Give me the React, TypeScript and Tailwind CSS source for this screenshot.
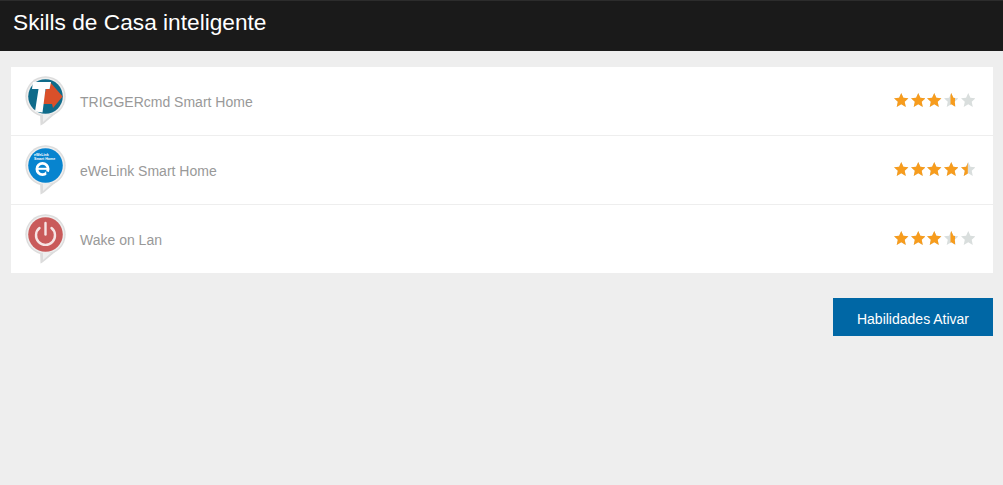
import { useId } from 'react';

const STAR = 'M7.25 0 L9.4 4.8 L14.5 5.3 L10.7 8.8 L11.8 14 L7.25 11.3 L2.7 14 L3.8 8.8 L0 5.3 L5.1 4.8 Z';

// from/to are the slice of the star (0-14.5) painted orange
function Star({ from = 0, to = 14.5 }: { from?: number; to?: number }) {
    const id = useId();
    return (
        <svg width="14.5" height="14" viewBox="0 0 14.5 14">
            <defs>
                <clipPath id={id}>
                    <rect x={from} y="0" width={to - from} height="14" />
                </clipPath>
            </defs>
            <path d={STAR} fill="#d9dedd" />
            <path d={STAR} fill="#f79c1d" clipPath={`url(#${id})`} />
        </svg>
    );
}

function Rating({ value }: { value: number }) {
    const full = Math.floor(value);
    return (
        <div className="flex gap-[2.1px] mr-[18px] mt-[-4px]">
            {[0, 1, 2, 3, 4].map((i) => {
                if (i < full) return <Star key={i} />;
                if (i > full) return <Star key={i} to={0} />;
                // the half star is drawn differently on the 3.5 ratings
                return value === 3.5 ? <Star key={i} from={6.5} to={11} /> : <Star key={i} to={6.8} />;
            })}
        </div>
    );
}

function Bubble({ children }: { children: React.ReactNode }) {
    return (
        <svg width="42" height="50" viewBox="0 0 42 50" className="shrink-0 mt-[-2px]">
            <path d="M15 36 L15.5 49.5 Q17 49.5 30 38 Z" fill="#dcdcdc" />
            <circle cx="20.5" cy="20.5" r="20.2" fill="#dddddd" />
            <path d="M18 38 L18 46 L26 39 Z" fill="#efefef" />
            <circle cx="20.5" cy="20.5" r="18.8" fill="#eeeeee" />
            {children}
        </svg>
    );
}

function TriggerIcon() {
    return (
        <Bubble>
            <circle cx="20.5" cy="20.5" r="17.3" fill="#0f6b8a" />
            <path d="M21 13 L25 13 L25 6 L37.6 20.5 L28 32 L27 28 L17 28 Z" fill="#d9502a" />
            <path d="M8 6 L26 6 L24.6 13 L20.5 13 L17.5 36.5 L10 35.5 L13.5 13 L7 13 Z" fill="#ffffff" />
        </Bubble>
    );
}

function EweLinkIcon() {
    return (
        <Bubble>
            <circle cx="20.5" cy="20.5" r="17.3" fill="#0784cf" />
            <text x="9" y="11" fontSize="3.6" fontWeight="700" fill="#ffffff">eWeLink</text>
            <text x="9" y="14.5" fontSize="3.6" fontWeight="700" fill="#ffffff">Smart Home</text>
            <circle cx="17.5" cy="24" r="5.6" fill="none" stroke="#ffffff" strokeWidth="2.8" />
            <path d="M12.5 23.8 H22.5" stroke="#ffffff" strokeWidth="2" />
            <path d="M21 26 L25 27.5 L21.5 30 Z" fill="#0784cf" />
        </Bubble>
    );
}

function WakeIcon() {
    return (
        <Bubble>
            <circle cx="20.5" cy="20.5" r="17.3" fill="#c95a5a" />
            <path d="M14.5 14 A9.5 9.5 0 1 0 26.5 14" fill="none" stroke="#f6e4e4" strokeWidth="2.4" strokeLinecap="round" />
            <path d="M20.5 9 V20.5" stroke="#f6e4e4" strokeWidth="2.4" strokeLinecap="round" />
        </Bubble>
    );
}

const skills = [
    { name: 'TRIGGERcmd Smart Home', icon: <TriggerIcon />, rating: 3.5 },
    { name: 'eWeLink Smart Home', icon: <EweLinkIcon />, rating: 4.5 },
    { name: 'Wake on Lan', icon: <WakeIcon />, rating: 3.5 },
];

export default function App() {
    return (
        <div className="min-h-[485px] bg-[#eeeeee] font-['Liberation_Sans',Arial,sans-serif]">
            <div className="h-[51px] bg-[#1a1a1a] border-t border-[#2c2c2c] pl-[13px] pt-[6px] text-[22.7px] leading-[30px] text-white">
                Skills de Casa inteligente
            </div>

            <div className="mr-[10px] mt-[16px] ml-[11px] bg-white">
                {skills.map((skill) => (
                    <div
                        key={skill.name}
                        className="flex items-center h-[69px] last:h-[68px] pl-[14px] pt-[1px] border-b last:border-b-0 border-[#eeeeee]"
                    >
                        {skill.icon}
                        <span className="ml-[13px] mt-[1px] text-[14px] text-[#999999]">{skill.name}</span>
                        <div className="ml-auto">
                            <Rating value={skill.rating} />
                        </div>
                    </div>
                ))}
            </div>

            <div className="flex justify-end mt-[25px] mr-[10px]">
                <button className="w-[160px] h-[38px] pt-[4px] bg-[#0067a5] text-white text-[14px]">Habilidades Ativar</button>
            </div>
        </div>
    );
}
